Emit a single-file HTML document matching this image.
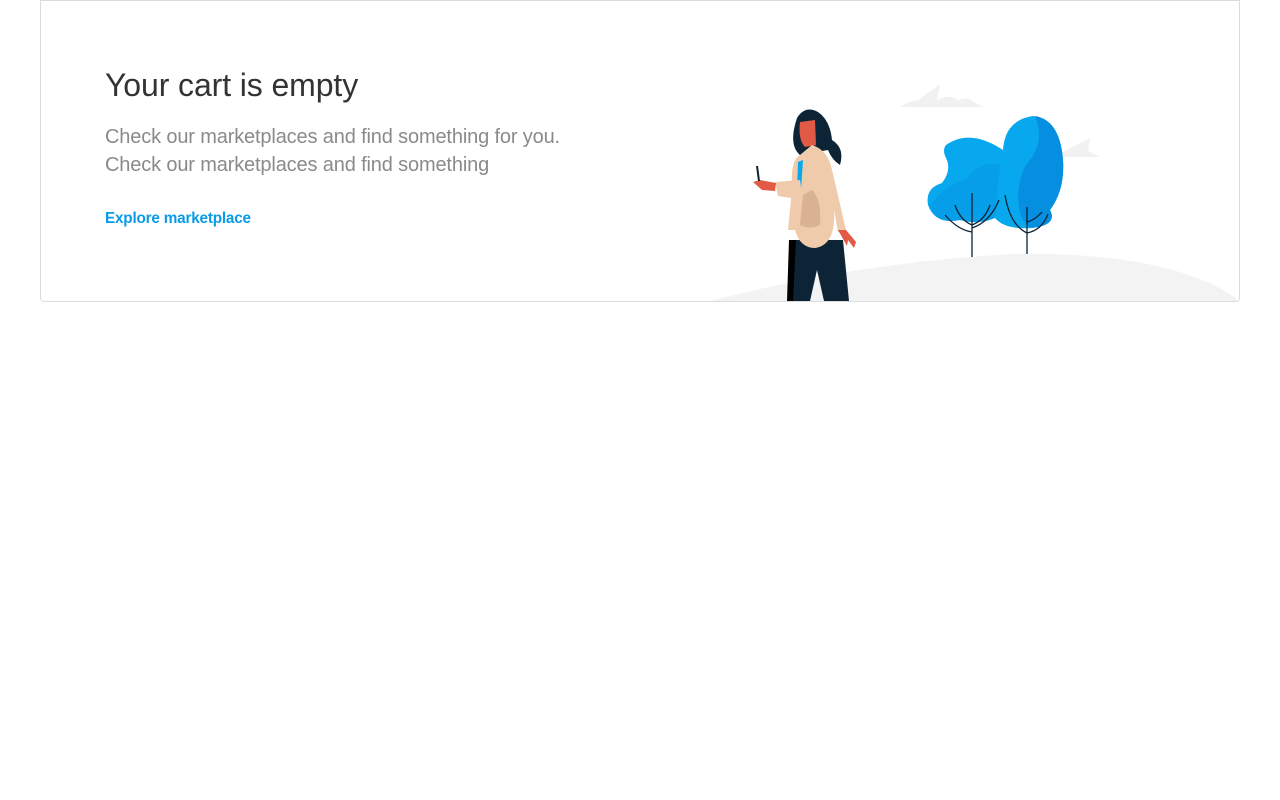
<!DOCTYPE html>
<html><head><meta charset="utf-8"><style>
html,body{margin:0;padding:0;background:#fff;width:1280px;height:800px;overflow:hidden;font-family:"Liberation Sans",sans-serif}
.card{position:absolute;left:40px;top:0;width:1198px;height:300px;border:1px solid #dcdcdc;border-radius:0 0 4px 4px;overflow:hidden}
h1{position:absolute;left:64px;top:66px;margin:0;font-weight:300;font-size:32px;color:#333;letter-spacing:-0.1px;white-space:nowrap}
p{position:absolute;left:64px;top:122px;margin:0;font-size:20px;line-height:28px;color:#8a8a8a;white-space:nowrap;letter-spacing:-0.15px}
a{position:absolute;left:64px;top:209px;font-size:15.3px;font-weight:bold;color:#0a9be8;text-decoration:none;letter-spacing:-0.2px}
svg{position:absolute;left:0;top:0}
</style></head><body>
<div class="card">
<svg width="1198" height="300" viewBox="41 1 1198 300">
<path d="M710 301 Q860 262 1015 254 Q1170 252 1236 298 L1236 301Z" fill="#f3f3f3"/>
<path d="M900 107 Q910 101 918 100 Q932 90 940 84 L937 100 Q950 93 958 101 Q966 95 975 103 L983 107Z" fill="#f1f1f1"/>
<path d="M1053 157 L1067 150 Q1080 143 1090 138 L1088 151 L1100 157Z" fill="#f1f1f1"/>
<path d="M946 145 Q970 128 1003 150 Q1005 120 1033 116 Q1060 120 1063 160 Q1065 190 1050 210 Q1058 225 1032 228 Q1005 230 995 218 Q978 225 960 220 Q935 225 928 205 Q925 188 942 183 Q952 170 946 158 Q942 150 946 145Z" fill="#08a8ee"/>
<path d="M1035 116 Q1060 120 1063 160 Q1065 190 1050 210 Q1058 225 1032 228 Q1018 222 1018 195 Q1020 170 1030 160 Q1045 140 1035 116Z" fill="#068fe0"/>
<path d="M930 205 Q945 185 965 180 Q980 160 1000 165 L995 218 Q978 225 960 220 Q935 225 930 205Z" fill="#0597e4" opacity=".6"/>
<g stroke="#0d2436" stroke-width="1.3" fill="none">
<path d="M972 193 L972 257 M955 205 Q960 220 972 225 Q985 220 990 205 M945 215 Q958 230 972 232 M999 200 Q990 222 972 228"/>
<path d="M1027 207 L1027 254 M1005 195 Q1010 225 1027 233 Q1042 230 1048 214 M1042 212 Q1035 220 1027 222"/>
</g>
<path d="M797 118 Q805 105 818 112 Q830 120 832 140 Q845 148 840 165 Q832 160 828 150 L800 155 Q788 145 797 118Z" fill="#0d2436"/>
<path d="M800 122 L815 120 L816 145 L805 147 Q798 140 800 122Z" fill="#e05a46"/>
<path d="M789 240 L843 240 L849 301 L824 301 L817 270 L810 301 L789 301Z" fill="#0d2436"/>
<path d="M789 240 L796 240 L793 301 L787 301Z" fill="#000"/>
<path d="M800 155 L812 145 Q828 150 832 170 L846 230 L838 232 L834 210 Q836 245 815 248 Q800 248 795 230 L788 230 L792 190 Q790 160 800 155Z" fill="#efcbab"/>
<path d="M798 162 L803 160 L801 190 L797 190Z" fill="#08a8ee"/>
<path d="M812 190 Q822 200 820 225 Q810 230 800 225 L803 195Z" fill="#d9b294"/>
<path d="M775 182 L800 180 L803 200 L778 196Z" fill="#efcbab"/>
<path d="M753 182 L760 180 L776 183 L775 191 L762 190Z" fill="#e05a46"/>
<path d="M756 166 L758 166 L760 181 L758 181Z" fill="#0d2436"/>
<path d="M838 230 L846 230 L856 242 L854 248 L848 240 L847 246 Z" fill="#e05a46"/>
</svg>
<h1>Your cart is empty</h1>
<p>Check our marketplaces and find something for you.<br>Check our marketplaces and find something</p>
<a href="#">Explore marketplace</a>
</div>
</body></html>
